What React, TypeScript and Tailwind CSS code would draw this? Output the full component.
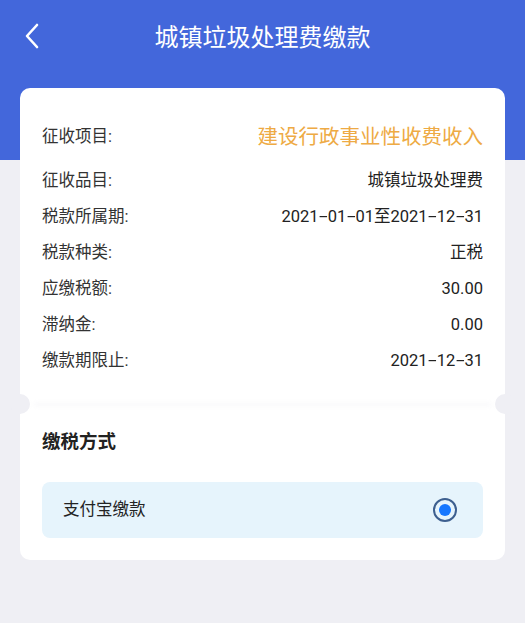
import * as React from "react";

const rows: { label: string; value: string }[] = [
  { label: "征收品目:", value: "城镇垃圾处理费" },
  { label: "税款所属期:", value: "2021-01-01至2021-12-31" },
  { label: "税款种类:", value: "正税" },
  { label: "应缴税额:", value: "30.00" },
  { label: "滞纳金:", value: "0.00" },
  { label: "缴款期限止:", value: "2021-12-31" },
];

const font = { fontFamily: 'Roboto, "Noto Sans CJK SC", "Noto Sans", sans-serif' };

// hyphens in the dates are drawn longer in the reference
function Value({ text }: { text: string }) {
  const parts = text.split("-");
  return (
    <span className="text-[16.5px] text-[#222]">
      {parts.map((p, i) => (
        <React.Fragment key={i}>
          {i > 0 && <span className="inline-block mx-[2.3px] scale-x-[1.9]">-</span>}
          {p}
        </React.Fragment>
      ))}
    </span>
  );
}

export default function App() {
  return (
    <div className="w-[525px] h-[623px] bg-[#efeff4] overflow-hidden" style={font}>
      {/* Header */}
      <div className="h-[160px] bg-[#4367db]">
        <div className="h-[75px] flex items-center relative">
          <svg className="absolute left-[22px] top-[23px]" width="20" height="26" viewBox="0 0 20 26" fill="none">
            <path d="M15 2 L5 13 L15 24" stroke="white" strokeWidth="2.6" strokeLinecap="round" strokeLinejoin="round" />
          </svg>
          <h1 className="w-full text-center text-white text-[24px] leading-none">城镇垃圾处理费缴款</h1>
        </div>
      </div>

      {/* Card */}
      <div className="mx-[20px] -mt-[72px] relative">
        <div className="bg-white rounded-t-[10px] px-[22px] pt-[35px] pb-[15px]">
          <div className="h-[28px] flex items-center justify-between">
            <span className="text-[16.5px] text-[#333]">征收项目:</span>
            <span className="text-[20.5px] text-[#eeaa44]">建设行政事业性收费收入</span>
          </div>
          <div className="mt-[12px]">
            {rows.map((r) => (
              <div key={r.label} className="h-9 flex items-center justify-between">
                <span className="text-[16.5px] text-[#333]">{r.label}</span>
                <Value text={r.value} />
              </div>
            ))}
          </div>
        </div>

        {/* Tear-off notch */}
        <div className="relative h-[20px] bg-white">
          <div className="absolute -left-[10px] top-0 w-[20px] h-[20px] rounded-full bg-[#efeff4]" />
          <div className="absolute -right-[10px] top-0 w-[20px] h-[20px] rounded-full bg-[#efeff4]" />
          <div className="absolute left-[14px] right-[14px] top-[9px] h-[3px] bg-[#f7f7f9] blur-[2px]" />
        </div>

        <div className="bg-white rounded-b-[10px] px-[22px] pt-[14px] pb-[22px]">
          <div className="h-[30px] flex items-center">
            <span className="text-[18.5px] font-bold text-[#222]">缴税方式</span>
          </div>
          <div className="mt-[24px] h-[56px] rounded-[8px] bg-[#e6f4fc] flex items-center justify-between pl-[21px] pr-[26px]">
            <span className="text-[16.5px] text-[#222]">支付宝缴款</span>
            <div className="w-[24px] h-[24px] rounded-full border-2 border-[#3d5f8f] flex items-center justify-center">
              <div className="w-[12px] h-[12px] rounded-full bg-[#1677ff]" />
            </div>
          </div>
        </div>
      </div>
    </div>
  );
}
